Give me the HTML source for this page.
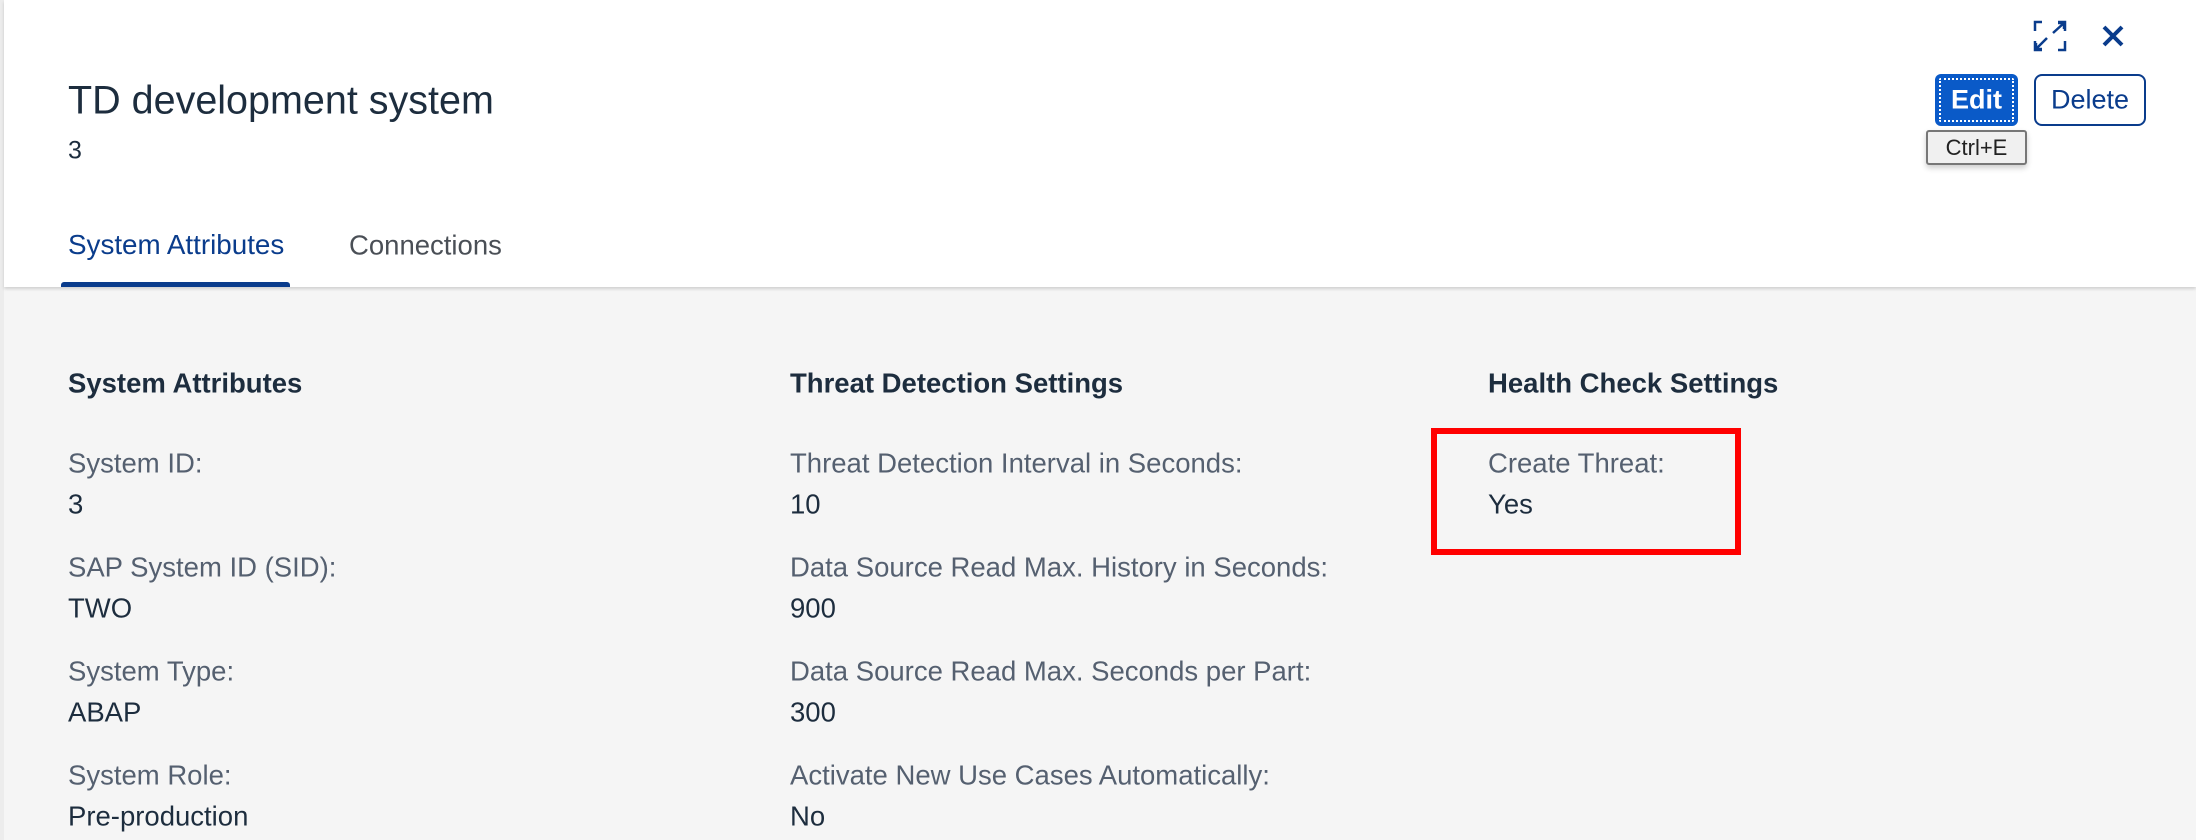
<!DOCTYPE html>
<html><head><meta charset="utf-8"><style>
*{margin:0;padding:0;box-sizing:border-box}
body{width:2196px;height:840px;overflow:hidden;background:#f5f5f5;font-family:"Liberation Sans",Arial,sans-serif;position:relative}
.hdr{position:absolute;left:4px;top:0;width:2192px;height:287px;background:#fff;box-shadow:0 2px 3px rgba(0,0,0,.15)}
.lb{position:absolute;left:0;top:0;width:4px;height:840px;background:#ececec}
.t{position:absolute;white-space:nowrap;line-height:1;transform:translateY(-50%)}
.h{font-weight:bold;font-size:27.5px;color:#1d2d3e}
.l{font-size:27.5px;color:#556070}
.v{font-size:27.5px;color:#1d2d3e}
</style></head><body>
<div class="lb"></div>
<div class="hdr"></div>
<div class="t" style="left:68px;top:101px;font-size:39.5px;color:#1d2d3e">TD development system</div>
<div class="t" style="left:68px;top:151px;font-size:25px;color:#1d2d3e">3</div>
<div class="t" style="left:68px;top:245px;font-size:27.8px;color:#0a3c8c">System Attributes</div>
<div class="t" style="left:349px;top:245px;font-size:27.5px;color:#4a4f56">Connections</div>
<div style="position:absolute;left:61px;top:282px;width:229px;height:5px;background:#0a3c8c;border-radius:3px 3px 0 0"></div>

<svg style="position:absolute;left:2033px;top:20px" width="34" height="32" viewBox="0 0 34 32" fill="none" stroke="#0a3c8c" stroke-width="2.5">
<path d="M2 11V2h7M25 2h7v9M32 21v9h-7M9 30H2v-9M20 13L31 3M25 3h6v6M3 29l11-11M3 23v6h6"/></svg>
<svg style="position:absolute;left:2101px;top:24px" width="24" height="24" viewBox="0 0 24 24" stroke="#0a3c8c" stroke-width="4"><path d="M3 3l18 18M21 3L3 21"/></svg>

<div style="position:absolute;left:1935px;top:74px;width:83px;height:52px;background:#0a5ac8;border-radius:6px;"><div style="position:absolute;inset:4px;border:2px dotted #fff;border-radius:2px"></div><div class="t" style="left:0;width:83px;text-align:center;top:26px;color:#fff;font-weight:bold;font-size:27px">Edit</div></div>
<div style="position:absolute;left:2034px;top:74px;width:112px;height:52px;border:2px solid #0a3c8c;border-radius:8px;background:#fff"><div class="t" style="left:0;width:108px;text-align:center;top:24px;color:#0a3c8c;font-size:27px">Delete</div></div>
<div style="position:absolute;left:1926px;top:130px;width:101px;height:35px;border:2px solid #777;border-radius:3px;background:#f0f0f0;box-shadow:0 3px 6px rgba(0,0,0,.2)"><div class="t" style="left:0;width:97px;text-align:center;top:16px;color:#222;font-size:22px">Ctrl+E</div></div>

<div class="t h" style="left:68px;top:383px">System Attributes</div>
<div class="t h" style="left:790px;top:383px">Threat Detection Settings</div>
<div class="t h" style="left:1488px;top:383px">Health Check Settings</div>

<div class="t l" style="left:68px;top:463px">System ID:</div>
<div class="t v" style="left:68px;top:504px">3</div>
<div class="t l" style="left:68px;top:567px">SAP System ID (SID):</div>
<div class="t v" style="left:68px;top:608px">TWO</div>
<div class="t l" style="left:68px;top:671px">System Type:</div>
<div class="t v" style="left:68px;top:712px">ABAP</div>
<div class="t l" style="left:68px;top:775px">System Role:</div>
<div class="t v" style="left:68px;top:816px">Pre-production</div>

<div class="t l" style="left:790px;top:463px">Threat Detection Interval in Seconds:</div>
<div class="t v" style="left:790px;top:504px">10</div>
<div class="t l" style="left:790px;top:567px">Data Source Read Max. History in Seconds:</div>
<div class="t v" style="left:790px;top:608px">900</div>
<div class="t l" style="left:790px;top:671px">Data Source Read Max. Seconds per Part:</div>
<div class="t v" style="left:790px;top:712px">300</div>
<div class="t l" style="left:790px;top:775px">Activate New Use Cases Automatically:</div>
<div class="t v" style="left:790px;top:816px">No</div>

<div class="t l" style="left:1488px;top:463px">Create Threat:</div>
<div class="t v" style="left:1488px;top:504px">Yes</div>
<div style="position:absolute;left:1431px;top:428px;width:310px;height:127px;border:6px solid #f00"></div>
</body></html>
